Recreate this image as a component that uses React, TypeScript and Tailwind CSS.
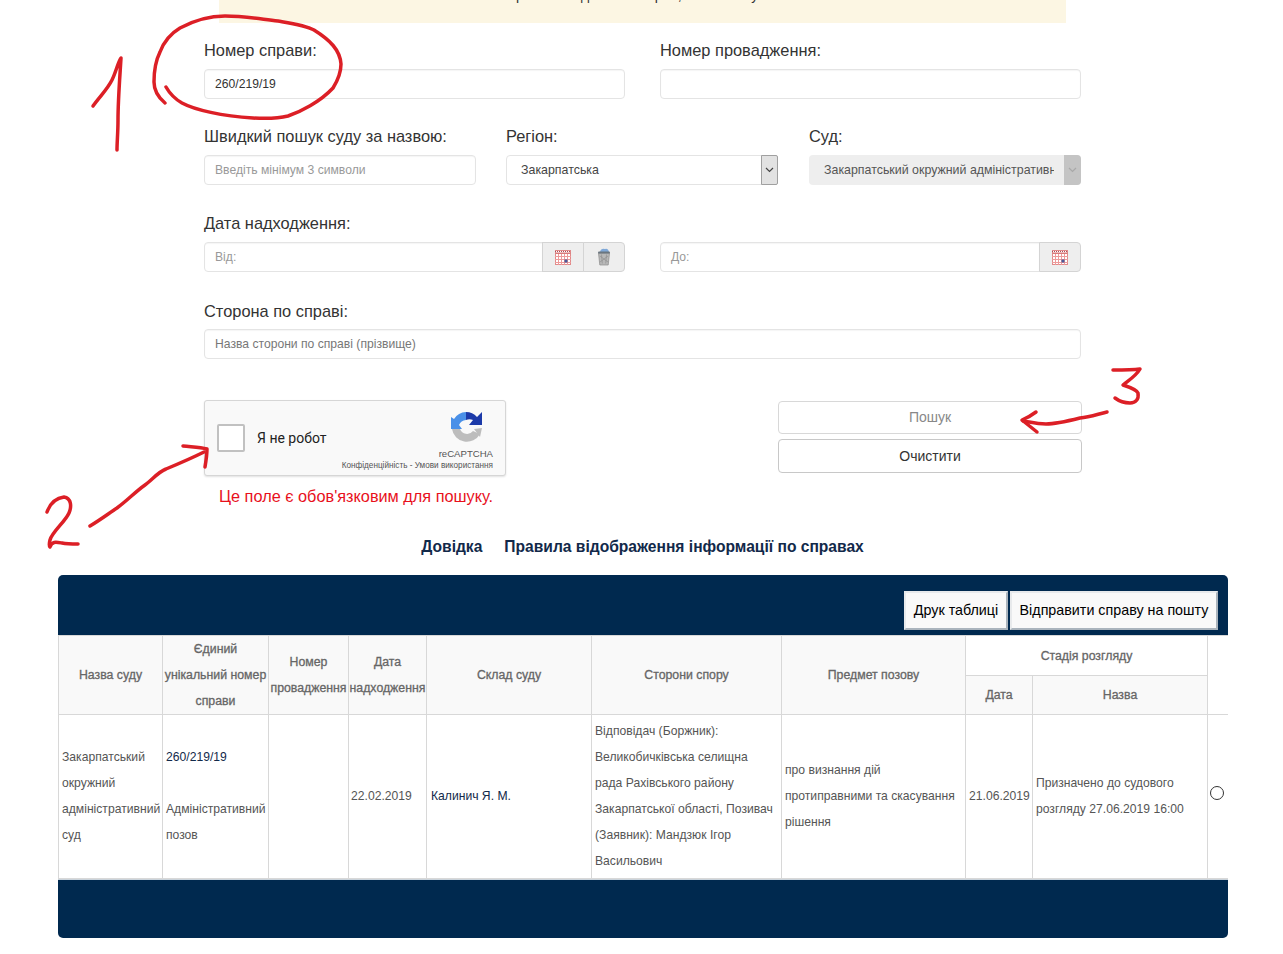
import type { ReactNode } from "react"

const inputClass =
  "h-[30px] rounded-[4px] border border-[#e4e4e4] bg-white shadow-[inset_0_1px_1px_rgba(0,0,0,0.04)] text-[12.15px] leading-[28px] px-[10px]"

function Label({ children }: { children: ReactNode }) {
  return <div className="h-5 mb-[9px] text-[16.4px] leading-5 text-[#333]">{children}</div>
}

function CalendarIcon() {
  return (
    <svg width="16" height="15" viewBox="0 0 16 15">
      <rect x="0.5" y="0.5" width="15" height="14" fill="#fff" stroke="#e08a8a" />
      <path d="M0 1.500h16" stroke="#a8505a" strokeWidth="1" strokeDasharray="1 1" />
      <rect x="0.5" y="2.500" width="15" height="1.500" fill="#d97a7a" />
      <path d="M0 6.500h16M0 9.500h16M0 12.500h16M3.500 4v11M6.500 4v11M9.500 4v11M12.500 4v11" stroke="#ee9a9a" strokeWidth="1" />
      <rect x="9.500" y="9.500" width="3" height="3" fill="#4a5a9a" />
    </svg>
  )
}

function TrashIcon() {
  return (
    <svg width="16" height="18" viewBox="0 0 16 18">
      <path d="M4 4 Q5 0 9 1 Q12 0 13 4Z" fill="#7fa8d8" />
      <path d="M2.500 5h11l-1.300 12h-8.400Z" fill="#b8b8b8" stroke="#8a8a8a" strokeWidth="0.7" />
      <path d="M4 8l8 6M12 8l-8 6M5.500 6.500l.8 9M10.500 6.500l-.8 9" stroke="#808080" strokeWidth="0.5" />
      <rect x="2" y="3.500" width="12" height="2" rx="1" fill="#6b7680" />
    </svg>
  )
}

function Addon({ children, last }: { children: ReactNode; last?: boolean }) {
  return (
    <div
      className={`w-[42px] h-[30px] shrink-0 flex items-center justify-center bg-[#eeeeee] border border-[#d4d4d4] -ml-px ${last ? "rounded-r-[4px]" : ""}`}
    >
      {children}
    </div>
  )
}

function Chevron({ color }: { color: string }) {
  return (
    <svg width="9" height="6" viewBox="0 0 9 6" fill="none">
      <path d="M1 1l3.500 3.500L8 1" stroke={color} strokeWidth="1.200" />
    </svg>
  )
}

function RecaptchaLogo() {
  return (
    <svg width="32" height="32" viewBox="0 0 32 32">
      <path d="M1 18 A15 15 0 0 0 29 23 L22 20 A7.500 7.500 0 0 1 9 18Z" fill="#bdbdbd" />
      <path d="M23 18 L31 17 L29 26Z" fill="#bdbdbd" />
      <path d="M15 1 A15 15 0 0 0 3 8 L0 6 L0 18 L11 18 L8 14 A8 8 0 0 1 15 9Z" fill="#4a90e8" />
      <path d="M15 1 A15 15 0 0 1 26 6 L31 1 L31 14 L18 14 L22 9 A8 8 0 0 0 15 9Z" fill="#1c3aa9" />
    </svg>
  )
}

function Th({ children, className = "", rowSpan, colSpan }: { children?: ReactNode; className?: string; rowSpan?: number; colSpan?: number }) {
  return (
    <th
      rowSpan={rowSpan}
      colSpan={colSpan}
      className={`border border-[#d8d8d8] px-0 text-center text-[12.3px] leading-[26px] font-normal text-[#666] [-webkit-text-stroke:0.3px_#666] ${className}`}
    >
      {children}
    </th>
  )
}

function Td({ children, className = "" }: { children?: ReactNode; className?: string }) {
  return <td className={`border border-[#d8d8d8] text-[12.15px] leading-[26px] text-[#555] ${className}`}>{children}</td>
}

export default function App() {
  return (
    <div className="relative w-[1283px] min-h-[954px] bg-white font-['Liberation_Sans',Arial,sans-serif] overflow-hidden">
      {/* жовтий банер, обрізаний зверху */}
      <div className="ml-[219px] w-[847px] h-[23px] bg-[#fcf6e3] overflow-hidden text-center text-[14px] leading-5 text-[#333]">
        <div className="-mt-[15px]">Сторінка має дані всіх справ, оновлено у 2019</div>
      </div>

      <div className="ml-[204px] w-[877px]">
        <div className="grid grid-cols-2 gap-x-[35px] mt-[17px]">
          <div>
            <Label>Номер справи:</Label>
            <div className={`${inputClass} text-[#333]`}>260/219/19</div>
          </div>
          <div>
            <Label>Номер провадження:</Label>
            <div className={inputClass}></div>
          </div>
        </div>

        <div className="grid grid-cols-[272px_272px_272px] gap-x-[30px] mt-[27px]">
          <div>
            <Label>Швидкий пошук суду за назвою:</Label>
            <div className={`${inputClass} text-[#999]`}>Введіть мінімум 3 символи</div>
          </div>
          <div>
            <Label>Регіон:</Label>
            <div className="flex h-[30px] rounded-[4px] border border-[#e4e4e4] bg-white text-[12.4px] leading-[28px] text-[#444]">
              <div className="flex-1 pl-[14px]">Закарпатська</div>
              <div className="w-[17px] flex items-center justify-center bg-[#e2e2e2] border border-[#a0a0a0] rounded-r-[2px] -my-px -mr-px">
                <Chevron color="#444" />
              </div>
            </div>
          </div>
          <div className="w-[272px] ml-px">
            <Label>Суд:</Label>
            <div className="flex h-[30px] rounded-[4px] bg-[#eeeeee] text-[12.4px] leading-[30px] text-[#555]">
              <div className="flex-1 ml-[15px] mr-[10px] overflow-hidden whitespace-nowrap">Закарпатський окружний адміністративний суд</div>
              <div className="w-[17px] flex items-center justify-center bg-[#c4c4c4] rounded-r-[4px]">
                <Chevron color="#a8a8a8" />
              </div>
            </div>
          </div>
        </div>

        <div className="mt-[28px]">
          <Label>Дата надходження:</Label>
          <div className="grid grid-cols-2 gap-x-[35px]">
            <div className="flex">
              <div className={`${inputClass} flex-1 rounded-r-none text-[#999]`}>Від:</div>
              <Addon><CalendarIcon /></Addon>
              <Addon last><TrashIcon /></Addon>
            </div>
            <div className="flex">
              <div className={`${inputClass} flex-1 rounded-r-none text-[#999]`}>До:</div>
              <Addon last><CalendarIcon /></Addon>
            </div>
          </div>
        </div>

        <div className="mt-[29px]">
          <div className="h-5 mb-2 text-[16.4px] leading-5 text-[#333]">Сторона по справі:</div>
          <div className={`${inputClass} text-[#777]`}>Назва сторони по справі (прізвище)</div>
        </div>

        <div className="flex justify-between w-[878px] mt-[41px]">
          <div>
            <div className="relative flex items-center w-[302px] h-[76px] bg-[#f9f9f9] border border-[#d6d6d6] rounded-[3px] shadow-[0_1px_2px_rgba(0,0,0,0.12)]">
              <div className="ml-3 w-7 h-7 bg-white border-2 border-[#c1c1c1] rounded-[2px]" />
              <div className="ml-3 font-['Roboto',sans-serif] text-[14px] text-[#222]">Я не робот</div>
              <div className="absolute right-3 top-[10px] flex flex-col items-end">
                <div className="mr-[10px]"><RecaptchaLogo /></div>
                <div className="mt-[5px] text-[9.6px] leading-3 text-[#555]">reCAPTCHA</div>
                <div className="whitespace-nowrap text-[8.2px] leading-3 text-[#555]">Конфіденційність - Умови використання</div>
              </div>
            </div>
            <div className="mt-[10px] ml-[15px] text-[16.3px] leading-5 text-[#e8101c]">Це поле є обов'язковим для пошуку.</div>
          </div>
          <div className="w-[304px] mt-px flex flex-col gap-[5px]">
            <button className="h-[33px] rounded-[4px] border border-[#d8d8d8] bg-white text-[14px] text-[#888]">Пошук</button>
            <button className="h-[34px] rounded-[4px] border border-[#c8c8c8] bg-white text-[14px] text-[#333]">Очистити</button>
          </div>
        </div>
      </div>

      <div className="flex justify-center gap-[22px] mt-[31px] ml-[2px] text-[15.6px] leading-5 font-bold text-[#12294a]">
        <span>Довідка</span>
        <span>Правила відображення інформації по справах</span>
      </div>

      {/* таблиця результатів */}
      <div className="ml-[58px] mt-[18px] w-[1170px] rounded-[5px] overflow-hidden">
        <div className="h-[60px] bg-[#00294f] flex justify-end items-start pt-4 pr-[10px] gap-[2px]">
          <button className="h-[39px] w-[104px] bg-[#f9f9f9] border-2 border-[#e8eaec] border-r-[#aab4bd] border-b-[#aab4bd] text-[14.3px] text-black">Друк таблиці</button>
          <button className="h-[39px] w-[208px] bg-[#f9f9f9] border-2 border-[#e8eaec] border-r-[#aab4bd] border-b-[#aab4bd] text-[14.3px] text-black">Відправити справу на пошту</button>
        </div>
        <table className="w-[1170px] table-fixed border-collapse">
          <colgroup>
            <col className="w-[104px]" />
            <col className="w-[106px]" />
            <col className="w-[80px]" />
            <col className="w-[78px]" />
            <col className="w-[165px]" />
            <col className="w-[190px]" />
            <col className="w-[184px]" />
            <col className="w-[67px]" />
            <col className="w-[175px]" />
            <col className="w-[21px]" />
          </colgroup>
          <thead>
            <tr className="h-[40px]">
              <Th rowSpan={2} className="bg-[#f9f9f9]">Назва суду</Th>
              <Th rowSpan={2} className="bg-[#f9f9f9] whitespace-nowrap">Єдиний<br />унікальний номер<br />справи</Th>
              <Th rowSpan={2} className="bg-[#f9f9f9] whitespace-nowrap">Номер<br />провадження</Th>
              <Th rowSpan={2} className="bg-[#f9f9f9] whitespace-nowrap">Дата<br />надходження</Th>
              <Th rowSpan={2} className="bg-[#f9f9f9]">Склад суду</Th>
              <Th rowSpan={2} className="bg-[#f9f9f9]">Сторони спору</Th>
              <Th rowSpan={2} className="bg-[#f9f9f9]">Предмет позову</Th>
              <Th colSpan={2} className="bg-white">Стадія розгляду</Th>
              <Th rowSpan={2} className="bg-white" />
            </tr>
            <tr className="h-[39px]">
              <Th className="bg-[#f9f9f9]">Дата</Th>
              <Th className="bg-[#f9f9f9]">Назва</Th>
            </tr>
          </thead>
          <tbody>
            <tr>
              <Td className="pt-[3px] pb-1 pl-[3px] pr-0">Закарпатський окружний адміністративний суд</Td>
              <Td className="pt-[3px] pb-1 pl-[3px] pr-0">
                <span className="text-[#12294a]">260/219/19</span>
                <br />
                <br />
                Адміністративний позов
              </Td>
              <Td />
              <Td className="pt-[3px] pb-1 pl-[2px] pr-0 text-[#444]">22.02.2019</Td>
              <Td className="pt-[3px] pb-1 pl-1 pr-0 text-[#12294a]">Калинич Я. М.</Td>
              <Td className="pt-[3px] pb-1 pl-[3px] pr-[5px]">
                Відповідач (Боржник): Великобичківська селищна рада Рахівського району Закарпатської області, Позивач (Заявник): Мандзюк Ігор Васильович
              </Td>
              <Td className="pt-[3px] pb-1 pl-[3px] pr-0">про визнання дій протиправними та скасування рішення</Td>
              <Td className="pt-[3px] pb-1 pl-[3px] pr-0 text-[#444]">21.06.2019</Td>
              <Td className="pt-[3px] pb-1 pl-[3px] pr-[10px]">Призначено до судового розгляду 27.06.2019 16:00</Td>
              <Td className="text-center">
                <input type="radio" className="appearance-none w-[14px] h-[14px] mb-[8px] mr-[2px] rounded-full border border-[#333] bg-white align-middle" readOnly />
              </Td>
            </tr>
          </tbody>
        </table>
        <div className="h-[59px] bg-[#00294f] border-t border-[#c9d2da]" />
      </div>

      {/* червоні позначки поверх скриншота */}
      <svg className="absolute left-0 top-0 w-[1283px] h-[954px] pointer-events-none" viewBox="0 0 1283 954" fill="none" stroke="#dc1f26" strokeWidth="3.500" strokeLinecap="round" strokeLinejoin="round">
        <path d="M93 106 C100 96 107 90 112 80 C116 72 118 62 121 58 C120 75 118 100 118 120 C118 132 117 142 117 150" />
        <path d="M166 87 C170 94 175 99 182 103 C195 110 222 116 253 118 C270 119 280 118 288 116 C300 112 320 102 333 88 C338 80 341 72 341 64 C340 50 330 40 314 30 C305 25 290 23 278 21 C260 19 245 16 225 16 C210 16 195 20 180 28 C170 34 163 44 160 52 C155 62 154 72 154 82 C154 92 159 98 165 103" />
        <path d="M47 512 C50 504 56 498 64 497 C71 498 72 506 69 513 C65 522 52 532 50 540 C49 544 49 546 50 547 C52 541 56 542 62 543 C67 544 72 544 78 544" />
        <path d="M90 526 C100 520 108 514 117 508 C128 500 135 492 145 485 C152 480 158 472 166 469 C178 464 192 458 204 452" />
        <path d="M183 446 C192 447 200 447 207 449 C207 455 206 461 205 467" />
        <path d="M1107 412 C1098 414 1090 417 1080 418 C1068 421 1056 424 1046 424 C1036 424 1030 422 1023 421" />
        <path d="M1036 412 C1032 415 1027 418 1022 420 C1027 424 1032 428 1037 432" />
        <path d="M1113 370 C1122 370 1132 370 1140 369 C1136 376 1129 380 1123 385 C1129 387 1136 389 1138 393 C1139 399 1136 403 1130 403 C1125 403 1119 401 1115 398" />
      </svg>
    </div>
  )
}
